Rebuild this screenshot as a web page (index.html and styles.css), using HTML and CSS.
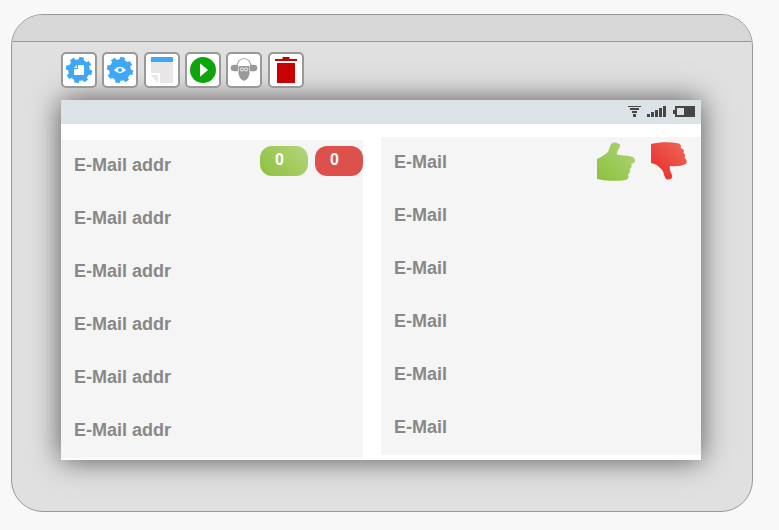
FILE: index.html
```html
<!DOCTYPE html>
<html lang="en">
<head>
<meta charset="utf-8">
<title>Screen designer</title>
<link rel="stylesheet" href="styles.css">
</head>
<body>
<main class="device">
  <div class="device-top"></div>
  <nav class="toolbar">
    <button class="tool" aria-label="Component settings"><svg viewBox="0 0 32 32"><g fill="#3fa7f5"><circle cx="16" cy="16" r="10.8"/><g id="teeth"><path id="tooth" d="M13.400 7L13.700 2.900h4.600L18.600 7z" transform="rotate(12 16 16)"/><use href="#tooth" transform="rotate(45 16 16)"/><use href="#tooth" transform="rotate(90 16 16)"/><use href="#tooth" transform="rotate(135 16 16)"/><use href="#tooth" transform="rotate(180 16 16)"/><use href="#tooth" transform="rotate(225 16 16)"/><use href="#tooth" transform="rotate(270 16 16)"/><use href="#tooth" transform="rotate(315 16 16)"/></g></g><path fill="#fff" d="M15 11h6v10H11v-6h4zM11 14l3-3v3z"/></svg></button>
    <button class="tool" aria-label="View settings"><svg viewBox="0 0 32 32"><g fill="#3fa7f5"><circle cx="16" cy="16" r="10.8"/><use href="#teeth"/></g><path fill="#fff" d="M10 16q6-6.600 12 0q-6 6.600-12 0z"/><circle cx="16" cy="16" r="2.1" fill="#3fa7f5"/></svg></button>
    <button class="tool" aria-label="Page"><svg viewBox="0 0 32 32"><path fill="#3fa7f5" d="M5 3h22v5H5z"/><path fill="#e8e6e7" d="M5 8h22v21H14V19H5zM5 21h7v8z"/></svg></button>
    <button class="tool" aria-label="Run"><svg viewBox="0 0 32 32"><circle cx="16" cy="16" r="13" fill="#0ca50c"/><path fill="#fff" d="M13 9.200l8 6.800-8 6.800z"/></svg></button>
    <button class="tool" aria-label="Test"><svg viewBox="0 0 32 32"><path d="M9 12.500a7 8 0 0 1 14 0" fill="none" stroke="#aaa" stroke-width="1.200"/><g fill="#999"><path d="M10.500 12h11v8l-1.500 4q-2 2.700-4 2.700T12 24l-1.500-4z"/><ellipse cx="6.300" cy="14" rx="3.600" ry="3.200"/><ellipse cx="25.700" cy="14" rx="3.600" ry="3.200"/><path d="M7 10.800h2.800v6.400H7zM22.200 10.800H25v6.400h-2.800z"/></g><g fill="none" stroke="#fff" stroke-width=".8"><circle cx="13.900" cy="15.400" r="1.600"/><circle cx="18.100" cy="15.400" r="1.600"/></g></svg></button>
    <button class="tool" aria-label="Delete"><svg viewBox="0 0 32 32"><path fill="#c80000" d="M12.500 3h7v2H27v2H5V5h7.500zM7 9h18v20H7z"/></svg></button>
  </nav>
  <section class="screen">
    <header class="status">
      <svg class="status-icons" viewBox="0 0 69 24"><g fill="#464646"><path d="M0 6h13v1H0zM2 8h9v2H2zM4 11h5v2H4zM5 14h3v3H5zM19 14h3v3h-3zM23 12h3v5h-3zM27 10h3v7h-3zM31 8h3v9h-3zM35 6h3v11h-3z"/><path fill-rule="evenodd" d="M47 6h20v11H47v-3h-2v-4h2zM49 8v7h7V8z"/></g></svg>
    </header>
    <div class="columns">
      <ul class="list list-left">
        <li>E-Mail addr<span class="badges"><b class="badge up">0</b><b class="badge down">0</b></span></li>
        <li>E-Mail addr</li><li>E-Mail addr</li><li>E-Mail addr</li><li>E-Mail addr</li><li>E-Mail addr</li>
      </ul>
      <ul class="list list-right">
        <li>E-Mail<svg class="thumbs" viewBox="0 0 92 40"><defs><linearGradient id="g" x1="0" y1="1" x2="1" y2="0"><stop stop-color="#8bc13f"/><stop offset="1" stop-color="#b0d476"/></linearGradient><linearGradient id="r" x1="0" y1="1" x2="1" y2="0"><stop stop-color="#e8272c"/><stop offset="1" stop-color="#ee6a55"/></linearGradient></defs><path fill="url(#g)" d="M0 17Q7 14 11 10L14 2Q18-1 23 2.500C24 6 19 9 20 12.500C25 14 31 13 36 15Q39.500 18 37 21L34 22Q36 25 32.500 27.500Q34 30 31 32.500Q33 36 29 38C19 39.500 9 39 0 37z"/><path fill="url(#r)" d="M54 2C63 0 73-.2 82 1.500Q85 3 83.500 6Q88 7 86.500 11Q89 12 87.500 16Q91 18 89 22Q82 25 73 24Q72 28 75 33Q76 38 70 37.500C66 35 68 29 63 26Q60 22 54 21z"/></svg></li>
        <li>E-Mail</li><li>E-Mail</li><li>E-Mail</li><li>E-Mail</li><li>E-Mail</li>
      </ul>
    </div>
  </section>
</main>
</body>
</html>
```
FILE: styles.css
```css
* { box-sizing: border-box; }
body {
  margin: 0;
  padding: 14px 0 0 11px;
  height: 530px;
  overflow: hidden;
  background: #f8f8f8;
  font-family: "Liberation Sans", Arial, sans-serif;
}
.device {
  width: 742px;
  height: 498px;
  border: 1px solid #999;
  border-radius: 32px;
  background: #e0e0e0;
  overflow: hidden;
}
.device-top { height: 27px; background: #d7d7d7; border-bottom: 1px solid #999; }
.toolbar { display: flex; gap: 5.35px; margin: 10px 0 0 49px; }
.tool {
  width: 36px;
  height: 36px;
  padding: 0;
  border: 2px solid #999;
  border-radius: 5px;
  background: #fff;
}
.tool svg { display: block; width: 32px; height: 32px; }
.screen {
  width: 640px;
  height: 360px;
  margin: 12px 0 0 49px;
  background: #fff;
  box-shadow: 0 0 27px #555;
}
.status { display: flex; justify-content: flex-end; height: 24px; padding-right: 4px; background: #dbe3e6; }
.status-icons { width: 69px; height: 24px; }
.columns { display: flex; align-items: flex-start; gap: 18px; }
.list { margin: 0; padding: 0; list-style: none; background: #f5f5f5; }
.list-left { width: 302px; margin-top: 16px; }
.list-right { width: 320px; margin-top: 13px; }
.list li {
  display: flex;
  justify-content: space-between;
  height: 53px;
  padding-left: 13px;
  color: #888;
  font-size: 18px;
  font-weight: bold;
  line-height: 51px;
}
.badges { display: flex; gap: 7px; padding-top: 6px; }
.badge {
  width: 48px;
  height: 30px;
  padding-left: 15px;
  border-radius: 12px;
  color: #fff;
  font-size: 16px;
  line-height: 27px;
}
.up { background: linear-gradient(45deg, #8dc03d, #b4d67c); }
.down { background: #dd514c; }
.thumbs { width: 92px; height: 40px; margin: 5px 12px 0 0; }
```
